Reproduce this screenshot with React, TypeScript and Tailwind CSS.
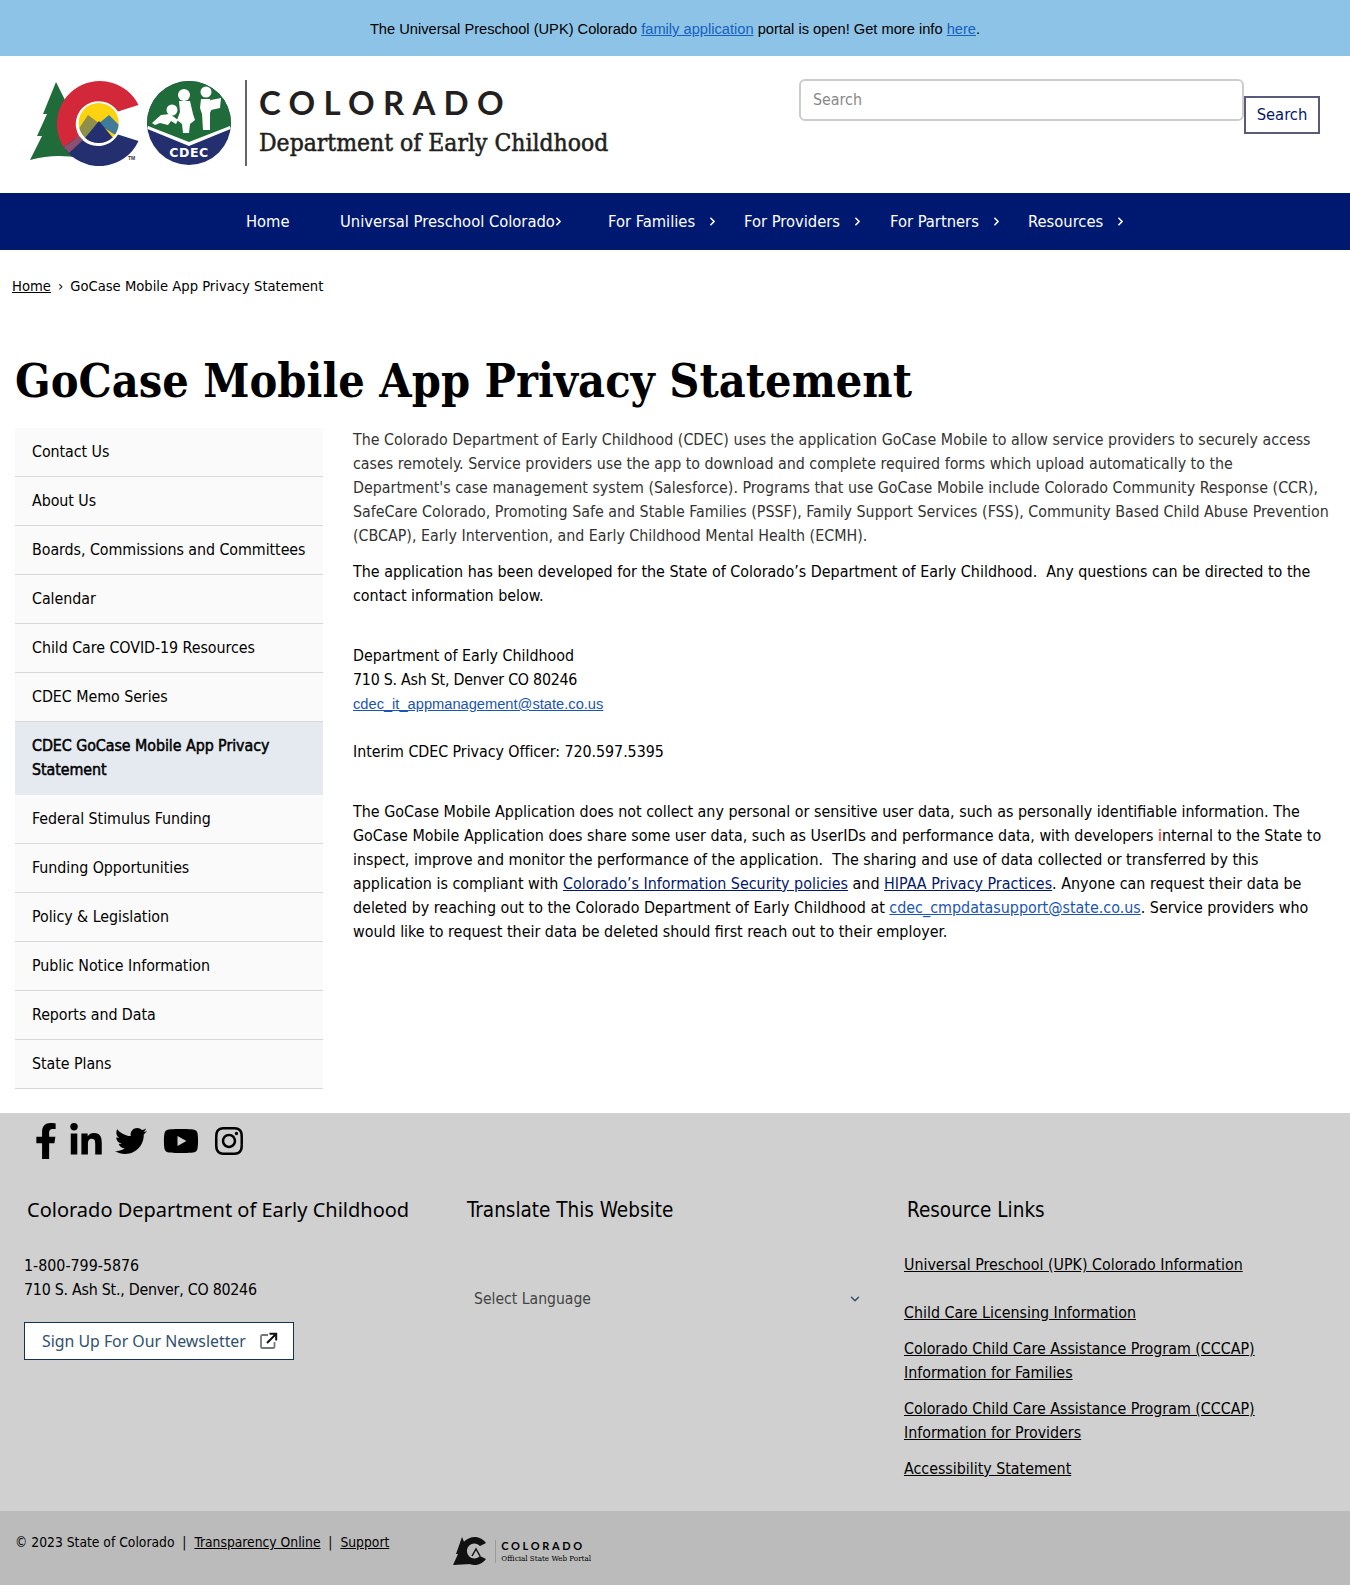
import { FaFacebookF, FaLinkedinIn, FaTwitter, FaYoutube, FaInstagram } from 'react-icons/fa'
import { ChevronRight, ChevronDown } from 'lucide-react'

const sideLinks = [
  'Contact Us',
  'About Us',
  'Boards, Commissions and Committees',
  'Calendar',
  'Child Care COVID-19 Resources',
  'CDEC Memo Series',
  'CDEC GoCase Mobile App Privacy Statement',
  'Federal Stimulus Funding',
  'Funding Opportunities',
  'Policy & Legislation',
  'Public Notice Information',
  'Reports and Data',
  'State Plans',
]

const navLinks = [
  { label: 'For Families', w: 'w-[136px]' },
  { label: 'For Providers', w: 'w-[146px]' },
  { label: 'For Partners', w: 'w-[138px]' },
  { label: 'Resources', w: 'w-[110px]' },
]

function Logo() {
  return (
    <div className="flex items-center">
      <svg width="203" height="86" viewBox="0 0 203 86" className="shrink-0">
        <defs>
          <clipPath id="peak">
            <circle cx="68.7" cy="43" r="20" />
          </clipPath>
        </defs>
        {/* tree */}
        <path d="M26 2 L37 24 L33 24 L42 42 L50 78 Q25 73 0 80 L12 56 L7 56 L17 34 L13 34 Z" fill="#1f6b3a" />
        {/* C */}
        <circle cx="68.7" cy="43" r="28" fill="#fff" />
        <path d="M108.5 25 A43 43 0 1 0 33.6 67 L49.2 56.2 A23 23 0 0 1 88 31.5 Z" fill="#d2283a" />
        <path d="M33.6 67 A43 43 0 0 0 108.5 61 L88 54.5 A23 23 0 0 1 49.2 56.2 Z" fill="#232f6e" />
        <path d="M33.6 67 L49.2 56.2 L53 60 L39 73 Z" fill="#8b4f70" />
        {/* mountains in the C */}
        <g clipPath="url(#peak)">
          <rect x="48" y="22" width="42" height="42" fill="#fdd20e" />
          <path d="M48 50 L58 35 L70 44 L60 64 Z" fill="#8d8f4a" />
          <path d="M68 44 L79 35 L90 46 L90 58 Z" fill="#3e7c9a" />
          <path d="M50 64 L69 41 L88 64 Z" fill="#232f6e" />
        </g>
        <text x="98" y="80" fontSize="5" fontWeight="700" fontFamily="'Liberation Sans', sans-serif" fill="#333">TM</text>
        {/* CDEC badge */}
        <circle cx="159" cy="43" r="42" fill="#232f6e" />
        <path d="M117 43 A42 42 0 0 1 201 43 L201 47 L159 63 L118 47 Z" fill="#1f6b3a" />
        <path d="M118 46 L159 62 L200 46 L200.5 49 L159 66 L117.5 49 Z" fill="#fff" />
        {/* baby */}
        <circle cx="142" cy="30" r="5.5" fill="#fff" />
        <path d="M122 43 L131 35 L140 34 L148 40 L146 44 L141 41 L138 45 L130 43 L125 45 Z" fill="#fff" />
        {/* girl */}
        <circle cx="154" cy="15" r="6" fill="#fff" />
        <path d="M149 21 L160 21 L163 34 L165 40 L160 44 L159 53 L153 53 L152 44 L147 40 L150 32 Z" fill="#fff" />
        {/* boy */}
        <circle cx="176" cy="12" r="5.5" fill="#fff" />
        <path d="M171 19 L180 19 L183 26 L180 33 L180 50 L173 50 L172 34 L170 28 Z" fill="#fff" />
        <path d="M181 20 L191 18 L190 28 L181 30 Z" fill="#fff" />
        <text x="159" y="77" textAnchor="middle" fontFamily="'DejaVu Sans', sans-serif" fontWeight="700" fontSize="12.5" letterSpacing="0.6" fill="#fff">CDEC</text>
      </svg>
      <div className="ml-[12px] w-[2px] h-[86px] bg-[#666]" />
      <div className="ml-[12px] -mt-[4px]">
        <div className="text-[33px] leading-[40px] font-bold tracking-[0.25em] text-[#231f20] font-['Lato',sans-serif]">COLORADO</div>
        <div className="mt-[3px] text-[24.45px] leading-[36px] text-[#231f20] font-['DejaVu_Serif_Condensed','DejaVu_Serif',serif] [-webkit-text-stroke:0.5px_#231f20] whitespace-nowrap">Department of Early Childhood</div>
      </div>
    </div>
  )
}

export default function App() {
  return (
    <div className="w-[1350px] bg-white text-black text-[15.85px] leading-[24px] font-['DejaVu_Sans_Condensed','DejaVu_Sans',sans-serif]">
      {/* alert banner */}
      <div className="h-[56px] bg-[#8dc3e6] flex items-center justify-center text-[14.67px] font-['Liberation_Sans',sans-serif]">
        <p className="mt-[2px]">
          The Universal Preschool (UPK) Colorado <a href="#" className="underline text-[#1560c0]">family application</a> portal is open! Get more info <a href="#" className="underline text-[#1560c0]">here</a>.
        </p>
      </div>

      {/* header */}
      <header className="h-[137px] flex items-start justify-between pl-[30px] pr-[30px]">
        <div className="pt-[24px]">
          <Logo />
        </div>
        <div className="flex items-start pt-[23px]">
          <div className="w-[445px] h-[42px] border-2 border-[#ccc] rounded-md px-3 flex items-center text-[#888]">Search</div>
          <button className="mt-[17px] w-[76px] h-[38px] border-2 border-[#5a5a7a] text-[#03186b] text-[16.4px]">Search</button>
        </div>
      </header>

      {/* main nav */}
      <nav className="h-[57px] bg-[#001970] text-white text-[16.4px] flex items-center pl-[246px] whitespace-nowrap">
        <a href="#" className="w-[94px]">Home</a>
        <a href="#" className="w-[268px] flex items-center">
          Universal Preschool Colorado<ChevronRight size={13} strokeWidth={3} className="-ml-[3px]" />
        </a>
        {navLinks.map((item) => (
          <a href="#" key={item.label} className={`${item.w} flex items-center`}>
            {item.label}
            <ChevronRight size={13} strokeWidth={3} className="ml-[11px]" />
          </a>
        ))}
      </nav>

      {/* breadcrumb */}
      <div className="h-[72px] pl-3 pt-[24px] text-[14.65px] flex items-start">
        <a href="#" className="underline">Home</a>
        <span className="mx-[7px]">›</span>
        <span>GoCase Mobile App Privacy Statement</span>
      </div>

      <h1 className="pl-[15px] pt-[29px] h-[106px] text-[46.4px] leading-[60px] font-bold font-['DejaVu_Serif_Condensed','DejaVu_Serif',serif] whitespace-nowrap">GoCase Mobile App Privacy Statement</h1>

      <div className="flex pl-[15px] pr-[20px]">
        {/* sidebar */}
        <aside className="w-[308px] shrink-0">
          {sideLinks.map((link) => {
            const active = link.startsWith('CDEC GoCase')
            return (
              <a
                href="#"
                key={link}
                className={`block pl-[17px] pr-[12px] py-[12px] border-b tracking-[-0.05px] ${active ? 'bg-[#e5e9f0] [-webkit-text-stroke:0.5px_#000] border-[#e5e9f0]' : 'bg-[#fafafa] border-[#d8d8d8]'}`}
              >
                {link}
              </a>
            )
          })}
        </aside>

        {/* content */}
        <main className="ml-[30px] flex-1">
          <p className="text-[#333]">
            The Colorado Department of Early Childhood (CDEC) uses the application GoCase Mobile to allow service providers to securely access cases remotely. Service providers use the app to download and complete required forms which upload automatically to the Department's case management system (Salesforce). Programs that use GoCase Mobile include Colorado Community Response (CCR), SafeCare Colorado, Promoting Safe and Stable Families (PSSF), Family Support Services (FSS), Community Based Child Abuse Prevention (CBCAP), Early Intervention, and Early Childhood Mental Health (ECMH).
          </p>
          <p className="mt-3 text-[15.92px]">
            The application has been developed for the State of Colorado’s Department of Early Childhood.&nbsp; Any questions can be directed to the contact information below.
          </p>
          <p className="mt-9">
            Department of Early Childhood
            <br />
            <span className="tracking-[-0.25px]">710 S. Ash St, Denver CO 80246</span>
            <br />
            <a href="#" className="underline text-[#1a56b0] text-[14.67px] font-['Liberation_Sans',sans-serif]">cdec_it_appmanagement@state.co.us</a>
          </p>
          <p className="mt-[24px] tracking-[-0.05px]">Interim CDEC Privacy Officer: 720.597.5395</p>
          <p className="mt-9 text-[15.92px]">
            The GoCase Mobile Application does not collect any personal or sensitive user data, such as personally identifiable information. The GoCase Mobile Application does share some user data, such as UserIDs and performance data, with developers <span className="text-[#e00]">i</span>nternal to the State to inspect, improve and monitor the performance of the application.&nbsp; The sharing and use of data collected or transferred by this application is compliant with <a href="#" className="underline text-[#03186b]">Colorado’s Information Security policies</a> and <a href="#" className="underline text-[#03186b]">HIPAA Privacy Practices</a>. Anyone can request their data be deleted by reaching out to the Colorado Department of Early Childhood at <a href="#" className="underline text-[#1a56b0]">cdec_cmpdatasupport@state.co.us</a>. Service providers who would like to request their data be deleted should first reach out to their employer.
          </p>
        </main>
      </div>

      {/* footer */}
      <footer className="mt-[24px] bg-[#d0d0d0] h-[398px]">
        <div className="flex items-center pl-[28px] h-[56px]">
          <FaFacebookF size={36} />
          <FaLinkedinIn size={36} className="ml-[4px]" />
          <FaTwitter size={32} className="ml-[11px]" />
          <FaYoutube size={36} className="ml-[16px]" />
          <FaInstagram size={32} className="ml-[14px]" />
        </div>
        <div className="flex pt-[26px]">
          <div className="w-[467px] pl-[24px]">
            <h2 className="pl-[3px] text-[20px] leading-[30px] font-['Noto_Sans',sans-serif] whitespace-nowrap">Colorado Department of Early Childhood</h2>
            <p className="mt-[29px]">
              1-800-799-5876
              <br />
              <span className="tracking-[-0.25px]">710 S. Ash St., Denver, CO 80246</span>
            </p>
            <a href="#" className="mt-[20px] w-[270px] h-[38px] border border-[#12325c] bg-white flex items-center pl-[17px] text-[#31506e] font-['Noto_Sans',sans-serif]">
              Sign Up For Our Newsletter
              <svg width="18" height="18" viewBox="0 0 18 18" className="ml-[14px] shrink-0" fill="none">
                <path d="M8 3 H2.5 Q1 3 1 4.5 V15 Q1 16 2.5 16 H13 Q14.5 16 14.5 15 V10" stroke="#777" strokeWidth="1.8" />
                <path d="M7 11 L15.5 2.5 M9.5 1.8 H16.2 V8.5" stroke="#111" strokeWidth="2" />
              </svg>
            </a>
          </div>
          <div className="w-[437px]">
            <h2 className="text-[20.5px] leading-[30px]">Translate This Website</h2>
            <div className="mt-[62px] w-[395px] pl-[7px] flex items-center justify-between text-[#444] text-[15.6px]">
              Select Language
              <ChevronDown size={14} strokeWidth={2.5} className="text-[#31506e]" />
            </div>
          </div>
          <div className="flex-1">
            <h2 className="pl-[3px] text-[20.5px] leading-[30px]">Resource Links</h2>
            <ul className="mt-[28px] w-[380px]">
              <li><a href="#" className="underline">Universal Preschool (UPK) Colorado Information</a></li>
              <li className="mt-6"><a href="#" className="underline">Child Care Licensing Information</a></li>
              <li className="mt-3"><a href="#" className="underline">Colorado Child Care Assistance Program (CCCAP) Information for Families</a></li>
              <li className="mt-3"><a href="#" className="underline">Colorado Child Care Assistance Program (CCCAP) Information for Providers</a></li>
              <li className="mt-3"><a href="#" className="underline">Accessibility Statement</a></li>
            </ul>
          </div>
        </div>
      </footer>

      {/* bottom bar */}
      <div className="h-[74px] bg-[#bbbbbb] pl-[15px] pt-[19px] flex items-start text-[13.75px]">
        <span className="whitespace-pre">© 2023 State of Colorado  |  </span>
        <a href="#" className="underline">Transparency Online</a>
        <span className="whitespace-pre">  |  </span>
        <a href="#" className="underline">Support</a>
        <div className="ml-[64px] mt-[7px] flex items-center">
          <svg width="36" height="28" viewBox="0 0 36 28" className="shrink-0">
            <path d="M9 0 L14 12 L12 12 L18 27 L0 28 L5 17 L3 17 Z" fill="#111" />
            <path d="M33 6 A14 14 0 1 0 33 22 L27 19 A7.5 7.5 0 1 1 27 9 Z" fill="#111" />
            <path d="M19 19 L23 12 L27 19" fill="none" stroke="#111" strokeWidth="1.5" />
          </svg>
          <div className="ml-[6px] pl-[5px] border-l border-[#999] leading-none">
            <div className="text-[11px] font-bold tracking-[0.24em] font-['Lato',sans-serif]">COLORADO</div>
            <div className="mt-[4px] text-[8px] font-['DejaVu_Serif_Condensed','DejaVu_Serif',serif] whitespace-nowrap">Official State Web Portal</div>
          </div>
        </div>
      </div>
    </div>
  )
}
